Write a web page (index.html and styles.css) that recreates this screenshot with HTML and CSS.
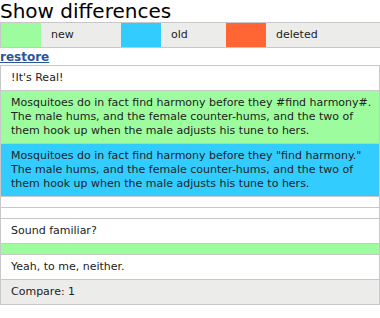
FILE: index.html
```html
<!DOCTYPE html>
<html>
<head>
    <title>Show differences</title>
    <meta charset="UTF-8">
    <link rel="stylesheet" href="styles.css">
</head>
<body>
    <h1 class="title">Show differences</h1>
    <div class="legend">
        <span class="swatch added"></span>
        <span class="label new">new</span>
        <span class="swatch removed"></span>
        <span class="label old">old</span>
        <span class="swatch deleted"></span>
        <span class="label last">deleted</span>
    </div>
    <a class="restore" href="#">restore</a>
    <div class="diff">
        <div class="row">!It's Real!</div>
        <div class="row added">Mosquitoes do in fact find harmony before they #find harmony#. The male hums, and the female counter-hums, and the two of them hook up when the male adjusts his tune to hers.</div>
        <div class="row removed">Mosquitoes do in fact find harmony before they "find harmony." The male hums, and the female counter-hums, and the two of them hook up when the male adjusts his tune to hers.</div>
        <div class="row empty"></div>
        <div class="row empty"></div>
        <div class="row">Sound familiar?</div>
        <div class="row empty added"></div>
        <div class="row">Yeah, to me, neither.</div>
        <div class="row footer">Compare: 1</div>
    </div>
</body>
</html>
```

FILE: styles.css
```css
body {
    margin: 0;
    font-family: "DejaVu Sans", Verdana, sans-serif;
    font-size: 11px;
    color: #222;
    background: white;
}
.title {
    margin: 0;
    font-size: 20px;
    font-weight: normal;
    line-height: 22px;
    color: #000;
}
.legend {
    display: flex;
    height: 24px;
    border: 1px solid #c8c8c8;
    border-right: none;
    background: #ecedeb;
}
.swatch {
    width: 40px;
}
.label {
    padding-left: 10px;
    line-height: 24px;
}
.label.new {
    width: 70px;
}
.label.old {
    width: 55px;
}
.label.last {
    flex: 1;
}
.added {
    background: #9dfc9d;
}
.removed {
    background: #33ccff;
}
.deleted {
    background: #ff6633;
}
.restore {
    display: block;
    margin-top: 2px;
    font-size: 12px;
    font-weight: bold;
    line-height: 15px;
    color: #2a5599;
}
.diff {
    border: 1px solid #c8c8c8;
    border-bottom: none;
}
.row {
    padding: 5px 2px 5px 10px;
    line-height: 14px;
    border-bottom: 1px solid #c8c8c8;
}
.row.empty {
    height: 10px;
    padding: 0;
}
.row.footer {
    background: #ecedeb;
}
```
